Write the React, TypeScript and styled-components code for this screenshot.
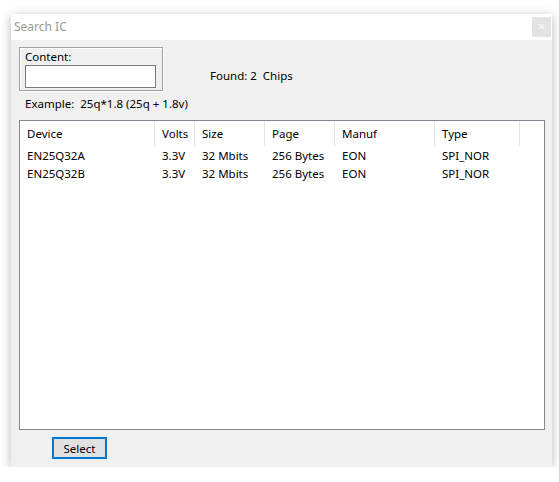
import React from "react";
import styled, { createGlobalStyle } from "styled-components";

const GlobalStyle = createGlobalStyle`
  html, body {
    margin: 0;
    padding: 0;
    background: #ffffff;
  }
  body {
    font-family: "Noto Sans", "Liberation Sans", sans-serif;
    font-size: 11.5px;
    color: #000;
  }
`;

const Page = styled.div`
  padding: 14px 0 0 11px;
`;

const Window = styled.div`
  width: 541px;
  height: 453px;
  display: flex;
  flex-direction: column;
  background: #f0f0f0;
  box-shadow: 0 2px 10px rgba(0, 0, 0, 0.28);
`;

const TitleBar = styled.div`
  height: 26px;
  flex: none;
  display: flex;
  justify-content: space-between;
  align-items: flex-start;
  background: #ffffff;
  padding: 3px 1px 0 3px;
  box-sizing: border-box;
`;

const Title = styled.span`
  color: #9a9a9a;
  font-size: 12px;
  line-height: 20px;
`;

const CloseButton = styled.div`
  width: 19px;
  height: 20px;
  background: #e3e3e3;
  color: #f7f7f7;
  font-size: 13px;
  font-weight: 700;
  line-height: 19px;
  text-align: center;
`;

const Body = styled.div`
  flex: 1;
  padding: 7px 8px 0 8px;
`;

const TopRow = styled.div`
  display: flex;
  align-items: center;
`;

const GroupBox = styled.div`
  width: 137px;
  height: 40px;
  border: 1px solid #a0a0a0;
  box-shadow: 1px 1px 0 #ffffff, inset 1px 1px 0 #ffffff;
  padding: 2px 0 0 5px;
  box-sizing: content-box;
`;

const GroupLabel = styled.div`
  line-height: 14px;
`;

const TextInput = styled.input`
  display: block;
  width: 131px;
  height: 23px;
  box-sizing: border-box;
  border: 1px solid #7a7a7a;
  background: #fff;
  margin: 1px 0 0 0;
  padding: 0 3px;
  font: inherit;
  outline: none;
`;

const Found = styled.div`
  margin-left: 47px;
  margin-top: 12px;
  white-space: pre;
`;

const Example = styled.div`
  margin-top: 5px;
  padding-left: 6px;
  line-height: 16px;
  white-space: pre;
`;

const ListBox = styled.div`
  margin-top: 8px;
  width: 526px;
  height: 310px;
  box-sizing: border-box;
  border: 1px solid #828790;
  background: #ffffff;
`;

const Row = styled.div<{ $header?: boolean }>`
  display: grid;
  grid-template-columns: 135px 40px 70px 70px 100px 85px;
  height: ${(p) => (p.$header ? "25px" : "18px")};
  align-items: stretch;
`;

const Cell = styled.div<{ $header?: boolean }>`
  padding-left: 7px;
  display: flex;
  align-items: center;
  white-space: nowrap;
  overflow: hidden;
  border-right: ${(p) => (p.$header ? "1px solid #e5e5e5" : "none")};
  padding-top: ${(p) => (p.$header ? "0" : "1px")};
`;

const Footer = styled.div`
  padding: 7px 0 0 33px;
`;

const Button = styled.button`
  width: 55px;
  height: 22px;
  box-sizing: border-box;
  border: 2px solid #0078d7;
  background: #e1e1e1;
  font: inherit;
  color: #000;
  padding: 0;
`;

const columns = ["Device", "Volts", "Size", "Page", "Manuf", "Type"];

const chips = [
  ["EN25Q32A", "3.3V", "32 Mbits", "256 Bytes", "EON", "SPI_NOR"],
  ["EN25Q32B", "3.3V", "32 Mbits", "256 Bytes", "EON", "SPI_NOR"],
];

const App = () => {
  return (
    <Page>
      <GlobalStyle />
      <Window>
        <TitleBar>
          <Title>Search IC</Title>
          <CloseButton>×</CloseButton>
        </TitleBar>
        <Body>
          <TopRow>
            <GroupBox>
              <GroupLabel>Content:</GroupLabel>
              <TextInput />
            </GroupBox>
            <Found>Found: 2  Chips</Found>
          </TopRow>
          <Example>Example:  25q*1.8 (25q + 1.8v)</Example>
          <ListBox>
            <Row $header>
              {columns.map((c) => (
                <Cell $header key={c}>
                  {c}
                </Cell>
              ))}
            </Row>
            {chips.map((chip) => (
              <Row key={chip[0]}>
                {chip.map((v, i) => (
                  <Cell key={i}>{v}</Cell>
                ))}
              </Row>
            ))}
          </ListBox>
          <Footer>
            <Button>Select</Button>
          </Footer>
        </Body>
      </Window>
    </Page>
  );
};

export default App;
